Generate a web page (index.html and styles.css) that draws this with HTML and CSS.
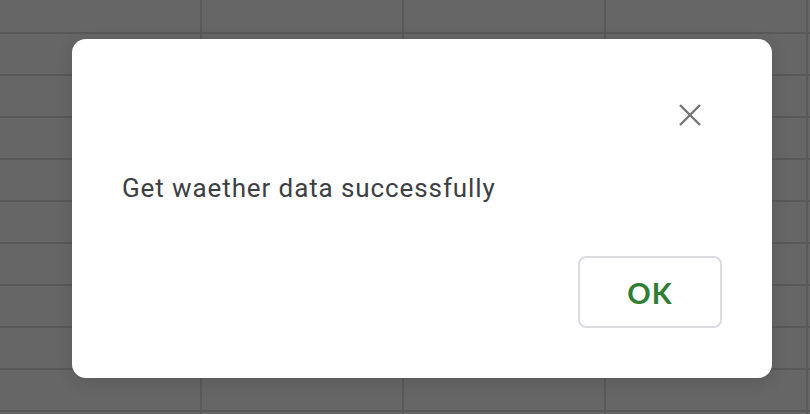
FILE: index.html
```html
<!DOCTYPE html>
<html lang="en">
<head>
  <meta charset="UTF-8" />
  <title>Weather data</title>
  <meta name="viewport" content="width=device-width, initial-scale=1.0" />
  <link rel="stylesheet" href="styles.css">
</head>
<body>
  <div class="sheet">
    <div class="dialog" role="dialog" aria-modal="true">
      <div class="dialog-head">
        <button class="close-btn" aria-label="Close">
          <svg width="22" height="22" viewBox="0 0 22 22">
            <path d="M1 1 L21 21 M21 1 L1 21" stroke="#757575" stroke-width="2.4" fill="none" />
          </svg>
        </button>
      </div>
      <p class="dialog-msg">Get waether data successfully</p>
      <div class="dialog-actions">
        <button class="ok-btn">OK</button>
      </div>
    </div>
  </div>
</body>
</html>
```

FILE: styles.css
```css
:root {
  --shade: #666666;
  --grid-line: #595959;
  --text: #3c4043;
  --green: #2e7d32;
  --border: #dadce0;
}
html, body {
  margin: 0;
  padding: 0;
  height: 100%;
}
body {
  font-family: Roboto, "Liberation Sans", sans-serif;
  background-color: var(--shade);
}
.sheet {
  height: 100%;
  box-sizing: border-box;
  padding: 39px 0 0 72px;
  background-color: var(--shade);
  background-image:
    repeating-linear-gradient(to bottom, transparent 0, transparent 32px, var(--grid-line) 32px, var(--grid-line) 34px, transparent 34px, transparent 42px),
    repeating-linear-gradient(to right, transparent 0, transparent 200px, var(--grid-line) 200px, var(--grid-line) 202px);
  background-size: 100% 42px, 202px 100%;
}
.dialog {
  width: 700px;
  height: 339px;
  box-sizing: border-box;
  padding: 50px;
  background: #fff;
  border-radius: 14px;
  box-shadow: 0 4px 18px rgba(0, 0, 0, 0.12);
  display: flex;
  flex-direction: column;
}
.dialog-head {
  height: 52px;
  display: flex;
  justify-content: flex-end;
  align-items: center;
}
.close-btn {
  width: 40px;
  height: 40px;
  margin-right: 12px;
  padding: 0;
  border: none;
  background: none;
  display: flex;
  align-items: center;
  justify-content: center;
  cursor: pointer;
}
.dialog-msg {
  margin: 29px 0 0;
  font-size: 26px;
  line-height: 36px;
  letter-spacing: 0.9px;
  color: var(--text);
}
.dialog-actions {
  margin-top: auto;
  display: flex;
  justify-content: flex-end;
}
.ok-btn {
  width: 144px;
  height: 72px;
  border: 2px solid var(--border);
  border-radius: 8px;
  background: #fff;
  color: var(--green);
  font-family: Lato, "Open Sans", sans-serif;
  font-weight: 700;
  font-size: 29px;
  letter-spacing: 1px;
  cursor: pointer;
}
```
